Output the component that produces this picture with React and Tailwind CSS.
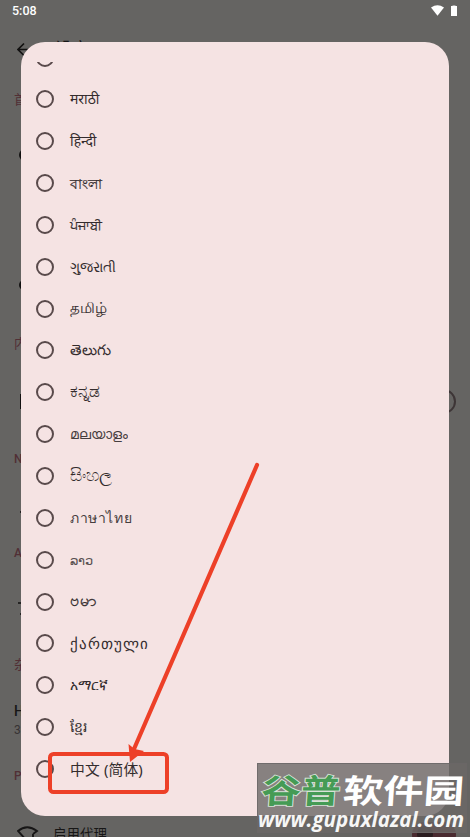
import React from "react";

const languages = [
  { name: "मराठी", style: "text-[14px]" },
  { name: "हिन्दी", style: "text-[14px]" },
  { name: "বাংলা", style: "text-[14px] pt-px [-webkit-text-stroke:0.2px]" },
  { name: "ਪੰਜਾਬੀ", style: "text-[13.4px] [-webkit-text-stroke:0.2px]" },
  { name: "ગુજરાતી", style: "text-[13.6px]" },
  { name: "தமிழ்", style: "text-[14.8px] pb-[3px] [-webkit-text-stroke:0.1px]" },
  { name: "తెలుగు", style: "text-[14.8px] pb-[3px]" },
  { name: "ಕನ್ನಡ", style: "text-[17px] pb-[2px] [-webkit-text-stroke:0.1px]" },
  { name: "മലയാളം", style: "text-[13.6px] opacity-90" },
  { name: "සිංහල", style: "text-[17px] pb-[2px]" },
  { name: "ภาษาไทย", style: "text-[14px] tracking-[0.6px] opacity-90" },
  { name: "ລາວ", style: "text-[13.4px] opacity-80" },
  { name: "ဗမာ", style: "text-[16px] pb-[3px] [-webkit-text-stroke:0.3px]" },
  { name: "ქართული", style: "text-[14.5px] pb-px tracking-[1px]" },
  { name: "አማርኛ", style: "text-[14px]" },
  { name: "ខ្មែរ", style: "text-[14px]" },
  { name: "中文 (简体)", style: "text-[14.8px] tracking-[0.15px]" },
];

function Radio() {
  return <span className="block size-[18px] shrink-0 rounded-full border-2 border-[#594a4b]" />;
}

function LanguageRow({ name, style }) {
  return (
    <li className="flex h-[41.85px] shrink-0 items-center gap-[16px] pl-[15px]">
      <Radio />
      <span className={`${style} whitespace-nowrap leading-5`}>{name}</span>
    </li>
  );
}

function StatusBar() {
  return (
    <div className="flex h-[21px] shrink-0 items-center justify-between pl-[12px] pr-[13px] text-white">
      <span className="pt-px font-[Roboto] text-[12.5px] font-medium leading-none">5:08</span>
      <div className="flex items-start gap-[7px]">
        <svg width="13" height="11" viewBox="0 0 13 11" className="-mt-px">
          <path d="M0 2.6Q6.5-2 13 2.6L6.5 10.7Z" fill="currentColor" />
        </svg>
        <svg width="6" height="11" viewBox="0 0 6 11" className="-mt-px">
          <path d="M1.500 0h3v1H1.500z" fill="#aaa" />
          <path d="M0 1h6v10H0z" fill="currentColor" />
        </svg>
      </div>
    </div>
  );
}

function SettingsPage() {
  return (
    <div className="flex h-full flex-col overflow-hidden text-[#171616]">
      <StatusBar />
      <header className="flex h-[56px] shrink-0 items-center gap-[23px] pl-[17px]">
        <svg width="15" height="15" viewBox="0 0 15 15" fill="none" stroke="#121111" strokeWidth="1.7">
          <path d="M14 7.5H1.500M7 1.500l-6 6 6 6" />
        </svg>
        <span className="text-[17px] leading-5">设定</span>
      </header>
      <div className="flex h-[46px] shrink-0 items-center pl-[14px] text-[13px] text-[#512f35]">首选项</div>
      <div className="flex h-[64px] shrink-0 items-center pl-[19px]">
        <span className="size-[12px] rounded-full bg-[#121111]" />
      </div>
      <div className="flex h-[127px] shrink-0 items-end pb-[24px] pl-[19px]">
        <span className="size-[10px] rounded-full bg-[#121111]" />
      </div>
      <div className="flex h-[60px] shrink-0 items-center pl-[14px] text-[13px] text-[#512f35]">内容</div>
      <div className="flex h-[54px] shrink-0 items-center justify-between pl-[20px] pr-[14px]">
        <span className="h-[15px] w-[14px] bg-[#121111]" />
        <span className="h-[25px] w-[42px] rounded-full border-2 border-[#3d3536]" />
      </div>
      <div className="flex h-[62px] shrink-0 items-center pl-[14px] font-[Roboto] text-[12px] font-medium text-[#512f35]">Network</div>
      <div className="flex h-[44px] shrink-0 items-center pl-[20px]">
        <span className="h-[2px] w-[12px] bg-[#222020]" />
      </div>
      <div className="flex h-[38px] shrink-0 items-center pl-[14px] font-[Roboto] text-[12px] font-medium text-[#512f35]">Appearance</div>
      <div className="flex h-[72px] shrink-0 items-center pl-[18px]">
        <svg width="12" height="13" viewBox="0 0 12 13" fill="none" stroke="#121111" strokeWidth="1.6">
          <path d="M0 1h10M2 12h9M8 1v11" />
        </svg>
      </div>
      <div className="flex h-[42px] shrink-0 items-center pl-[14px] text-[13px] text-[#512f35]">杂项</div>
      <div className="flex h-[70px] shrink-0 flex-col justify-center pl-[14px] font-[Roboto]">
        <span className="text-[14px] font-medium leading-[18px]">History</span>
        <span className="text-[12px] leading-[20px] text-[#373334]">30</span>
      </div>
      <div className="flex h-[40px] shrink-0 items-center pl-[14px] font-[Roboto] text-[12px] font-medium text-[#512f35]">Proxy</div>
      <div className="flex h-[76px] shrink-0 items-center pl-[17px] pr-[14px]">
        <svg width="22" height="18" viewBox="0 0 22 18" fill="none" stroke="#171616" strokeWidth="1.9">
          <path d="M10 16L1 6Q10-1.500 20 6L16 9M16 9v7h5" />
        </svg>
        <span className="ml-[14px] text-[13.5px] leading-5">启用代理</span>
        <span className="ml-auto flex h-[25px] w-[44px] items-center rounded-full bg-[#4a2a30] pl-[5px]">
          <span className="size-[16px] rounded-full bg-[#2b1d20]" />
        </span>
      </div>
    </div>
  );
}

function LanguageDialog() {
  return (
    <section className="absolute left-[21px] top-[42px] h-[774px] w-[428px] overflow-hidden rounded-[24px] bg-[#f5e3e3] pt-[20px] text-[#332c2d]">
      <ul className="flex h-[734px] flex-col overflow-hidden">
        <li className="-mt-[25.35px] flex h-[41.85px] shrink-0 items-center pl-[15px]">
          <Radio />
        </li>
        {languages.map((language) => (
          <LanguageRow key={language.name} {...language} />
        ))}
      </ul>
    </section>
  );
}

function Pointer() {
  return (
    <svg className="absolute left-0 top-0" width="470" height="837" fill="none" stroke="#ed4028">
      <rect x="50" y="754" width="117" height="38" rx="3.500" strokeWidth="4" />
      <path d="M257 465L134 749" strokeWidth="4.2" strokeLinecap="round" />
      <path d="M130 762L128.500 744L134.500 749L144 751Z" fill="#ed4028" stroke="none" />
    </svg>
  );
}

function Watermark() {
  return (
    <div className="absolute left-[257px] top-[763px] h-[70px] w-[210px] border border-[#6a6766]/80 bg-[#6c6867]/80">
      <svg width="211" height="71" viewBox="0 0 211 71" fontFamily="Noto Sans CJK SC, sans-serif">
        <g fontWeight="900" transform="translate(4 0) skewX(-4)">
          <text x="1.500" y="39" textLength="79" lengthAdjust="spacingAndGlyphs" fill="#459b55" stroke="#d8e2d8" strokeWidth="1.800" paintOrder="stroke" fontSize="33" fontWeight="700">谷普</text>
          <text x="83" y="39" textLength="121" lengthAdjust="spacingAndGlyphs" fill="#fff" fontSize="33" fontWeight="700">软件园</text>
        </g>
        <text x="0" y="63" textLength="206" lengthAdjust="spacingAndGlyphs" fill="#f6f6f6" fontSize="21.500" fontWeight="700" fontStyle="italic" fontFamily="Open Sans, sans-serif">www.gupuxlazal.com</text>
      </svg>
    </div>
  );
}

export default function App() {
  return (
    <main className="relative h-[837px] w-[470px] overflow-hidden bg-[#656462] font-['Noto_Sans','Noto_Sans_CJK_SC',sans-serif]">
      <SettingsPage />
      <LanguageDialog />
      <Pointer />
      <Watermark />
    </main>
  );
}
